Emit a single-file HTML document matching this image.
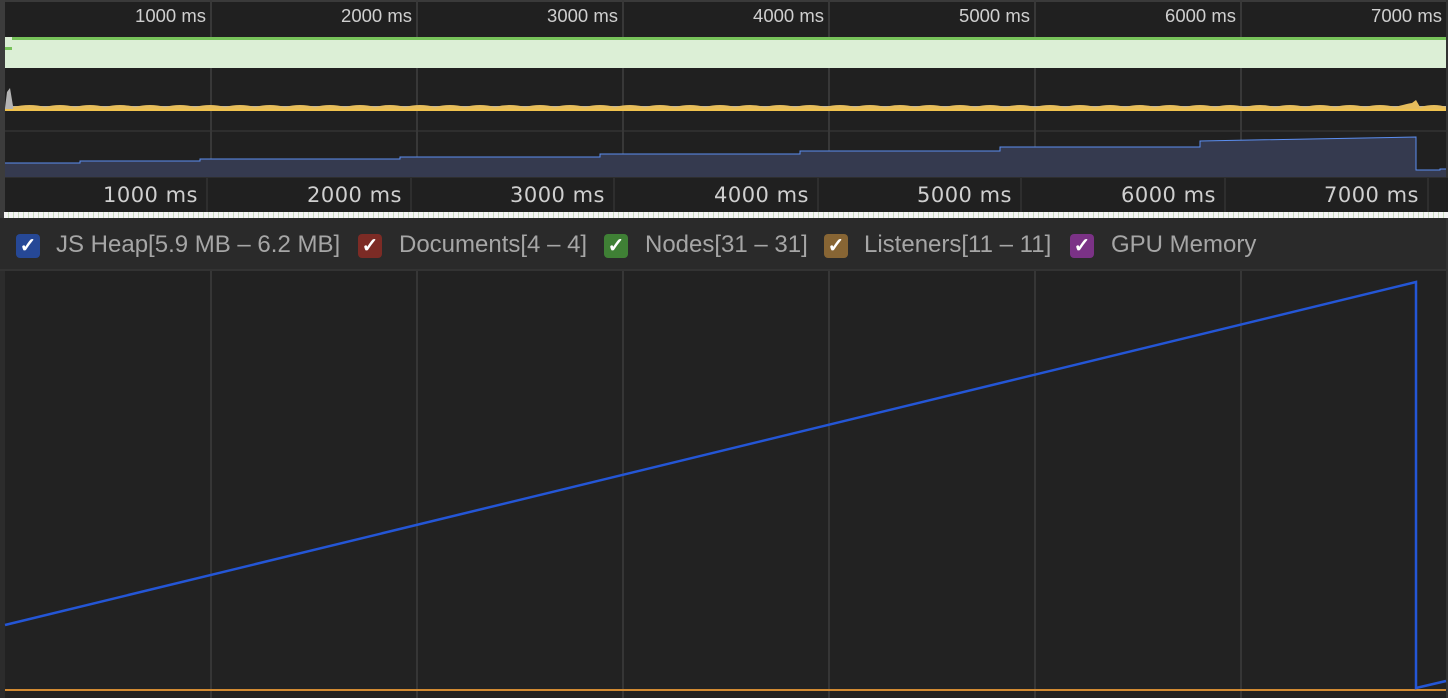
<!DOCTYPE html>
<html><head><meta charset="utf-8"><style>
body{margin:0;width:1448px;height:698px;background:#222;overflow:hidden;position:relative;font-family:"Liberation Sans",sans-serif}
.a{position:absolute}
.tl{position:absolute;top:5px;font-size:18.5px;color:#cfcfcf;text-align:right;width:120px}
.bl{position:absolute;top:183px;font-size:21px;color:#cfcfcf;text-align:right;width:140px;font-family:"DejaVu Sans",sans-serif;letter-spacing:0.5px}
.cb{position:absolute;top:234px;width:24px;height:24px;border-radius:4px;color:#fff;font-size:20px;line-height:24px;text-align:center;font-weight:bold}
.lt{position:absolute;top:231px;font-size:24px;color:#a6a6a6}
</style></head><body>
<div class="a" style="left:0;top:0;width:1448px;height:37px;background:#202020;border-top:2px solid #3a3a3a;box-sizing:border-box"></div>
<div class="a" style="left:0;top:0;width:5px;height:218px;background:#3c3c3c"></div>
<div class="a" style="left:1446px;top:0;width:2px;height:698px;background:#333"></div>
<div class="a" style="left:5px;top:68px;width:1441px;height:62px;background:#202020"></div>
<div class="a" style="left:5px;top:130px;width:1441px;height:2px;background:#2e2e2e"></div>
<div class="a" style="left:5px;top:132px;width:1441px;height:45px;background:#202020"></div>
<svg class="a" style="left:0;top:0" width="1448" height="180">
<g stroke="#383838" stroke-width="2">
<line x1="211" y1="0" x2="211" y2="177"/><line x1="417" y1="0" x2="417" y2="177"/><line x1="623" y1="0" x2="623" y2="177"/><line x1="829" y1="0" x2="829" y2="177"/><line x1="1035" y1="0" x2="1035" y2="177"/><line x1="1241" y1="0" x2="1241" y2="177"/>
</g>
<rect x="5" y="37" width="1441" height="31" fill="#dcefd6"/>
<rect x="12" y="37" width="1434" height="3" fill="#77c25a"/>
<rect x="5" y="47" width="7" height="3" fill="#77c25a"/>
<path d="M5 108 L7 92 L10 88 L13 106 L1446 106 L1446 110 L5 110Z" fill="#cfcfcf" opacity="0.85"/>
<path d="M13 107 Q30 103 45 107 Q60 103 75 107 Q90 103 105 107 Q120 103 135 107 Q150 103 165 107 Q180 103 195 107 Q210 103 225 107 Q240 103 255 107 Q270 103 285 107 Q300 103 315 107 Q330 103 345 107 Q360 103 375 107 Q390 103 405 107 Q420 103 435 107 Q450 103 465 107 Q480 103 495 107 Q510 103 525 107 Q540 103 555 107 Q570 103 585 107 Q600 103 615 107 Q630 103 645 107 Q660 103 675 107 Q690 103 705 107 Q720 103 735 107 Q750 103 765 107 Q780 103 795 107 Q810 103 825 107 Q840 103 855 107 Q870 103 885 107 Q900 103 915 107 Q930 103 945 107 Q960 103 975 107 Q990 103 1005 107 Q1020 103 1035 107 Q1050 103 1065 107 Q1080 103 1095 107 Q1110 103 1125 107 Q1140 103 1155 107 Q1170 103 1185 107 Q1200 103 1215 107 Q1230 103 1245 107 Q1260 103 1275 107 Q1290 103 1305 107 Q1320 103 1335 107 Q1350 103 1365 107 Q1380 103 1395 107 Q1410 103 1412 103 L1416 100 L1420 107 Q1435 103 1446 107 L1446 110 L13 110Z" fill="#e6bd5c"/>
<rect x="5" y="109" width="1441" height="2" fill="#f0c24e"/>
<path d="M5 165 L5 163 L80 163 L80 161 L200 161 L200 159 L400 159 L400 157 L600 157 L600 154 L800 154 L800 151 L1000 151 L1000 147 L1200 147 L1200 141 L1416 137 L1416 170 L1440 170 L1440 169 L1446 169 L1446 177 L5 177Z" fill="#353a4f" stroke="none"/>
<path d="M5 163 L80 163 L80 161 L200 161 L200 159 L400 159 L400 157 L600 157 L600 154 L800 154 L800 151 L1000 151 L1000 147 L1200 147 L1200 141 L1416 137 L1416 170 L1440 170 L1440 169 L1446 169" fill="none" stroke="#5b8ef0" stroke-width="1"/>
</svg>
<div class="tl" style="left:86px">1000 ms</div><div class="tl" style="left:292px">2000 ms</div><div class="tl" style="left:498px">3000 ms</div><div class="tl" style="left:704px">4000 ms</div><div class="tl" style="left:910px">5000 ms</div><div class="tl" style="left:1116px">6000 ms</div><div class="tl" style="left:1322px">7000 ms</div>
<div class="a" style="left:5px;top:177px;width:1443px;height:35px;background:#202020;border-top:1px solid #2e2e2e"></div>
<svg class="a" style="left:0;top:177px" width="1448" height="35"><g stroke="#2e2e2e" stroke-width="2"><line x1="207" y1="0" x2="207" y2="35"/><line x1="411" y1="0" x2="411" y2="35"/><line x1="614" y1="0" x2="614" y2="35"/><line x1="818" y1="0" x2="818" y2="35"/><line x1="1021" y1="0" x2="1021" y2="35"/><line x1="1225" y1="0" x2="1225" y2="35"/><line x1="1428" y1="0" x2="1428" y2="35"/></g></svg>
<div class="bl" style="left:58px">1000 ms</div><div class="bl" style="left:262px">2000 ms</div><div class="bl" style="left:465px">3000 ms</div><div class="bl" style="left:669px">4000 ms</div><div class="bl" style="left:872px">5000 ms</div><div class="bl" style="left:1076px">6000 ms</div><div class="bl" style="left:1279px">7000 ms</div>
<div class="a" style="left:4px;top:212px;width:1444px;height:6px;background:repeating-linear-gradient(90deg,#f4f4f4 0 4px,#c9dcc0 4px 5px)"></div>
<div class="a" style="left:0;top:218px;width:1446px;height:52px;background:#2a2a2a"></div>
<div class="a" style="left:0;top:269px;width:1446px;height:2px;background:#333"></div>
<div class="cb" style="left:16px;background:#264896">✓</div><div class="lt" style="left:56px">JS Heap[5.9 MB – 6.2 MB]</div>
<div class="cb" style="left:358px;background:#7c2b25">✓</div><div class="lt" style="left:399px">Documents[4 – 4]</div>
<div class="cb" style="left:604px;background:#3f8035">✓</div><div class="lt" style="left:645px">Nodes[31 – 31]</div>
<div class="cb" style="left:824px;background:#876534">✓</div><div class="lt" style="left:864px">Listeners[11 – 11]</div>
<div class="cb" style="left:1070px;background:#7b3286">✓</div><div class="lt" style="left:1111px">GPU Memory</div>
<svg class="a" style="left:0;top:271px" width="1448" height="427">
<g stroke="#363636" stroke-width="2"><line x1="211" y1="0" x2="211" y2="427"/><line x1="417" y1="0" x2="417" y2="427"/><line x1="623" y1="0" x2="623" y2="427"/><line x1="829" y1="0" x2="829" y2="427"/><line x1="1035" y1="0" x2="1035" y2="427"/><line x1="1241" y1="0" x2="1241" y2="427"/></g>
<rect x="0" y="0" width="5" height="427" fill="#2c2c2c"/>
<line x1="5" y1="419" x2="1446" y2="419" stroke="#d18a32" stroke-width="2"/>
<polyline points="5,354 1416,11 1416,417 1446,410" fill="none" stroke="#2456d6" stroke-width="2.5"/>
</svg>
</body></html>
